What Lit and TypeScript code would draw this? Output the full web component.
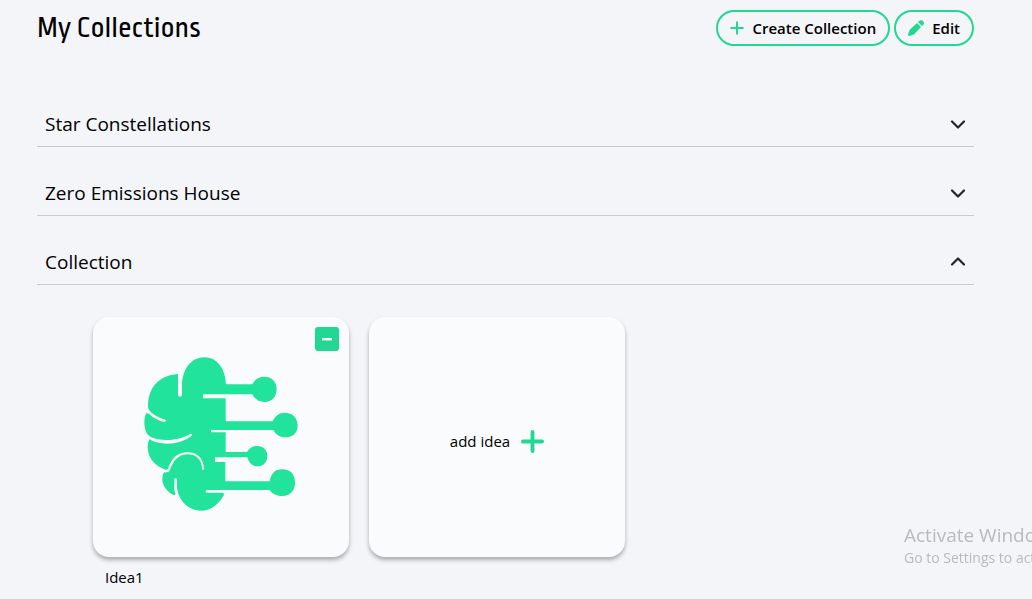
import { LitElement, html, css, svg } from "lit";
import { customElement, property, state } from "lit/decorators.js";

interface Collection {
  name: string;
  ideas: string[];
}

const plusIcon = (size: number, weight: number) => svg`
  <svg width=${size} height=${size} viewBox="0 0 24 24" fill="none" stroke="currentColor"
    stroke-width=${weight} stroke-linecap="round" aria-hidden="true">
    <path d="M12 2v20M2 12h20" />
  </svg>`;

const pencilIcon = svg`
  <svg width="16" height="16" viewBox="0 0 48 48" fill="currentColor" aria-hidden="true">
    <path d="M27 9 39 21 20 41Q17 44 13 45L4 48Q0 48 0 44L3 35Q4 31 7 28Z" />
    <path d="M30 6 34 2Q37 0 41 1Q45 2 47 6Q49 11 46 14L42 18Z" />
  </svg>`;

const brainIcon = svg`
  <svg class="brain" viewBox="42 50 462 462" role="img" aria-label="Idea">
    <g fill="#22e39b">
      <path d="M144 101V166Q150 171 156 166V132C158 85 184 51 223 51C263 51 286 87 288 132H367C374 117 387 109 404 109C426 109 440 125 440 147C440 170 425 185 404 185C387 185 374 177 367 162H219V174H287V243H428C435 227 448 217 465 217C488 217 503 233 503 256C503 277 488 291 466 291C449 291 437 282 430 269H243V276H287V335H351C359 323 366 317 381 317C400 317 412 329 412 347C412 366 400 378 382 378C367 378 357 369 352 351H255V365H286V423H419C423 401 434 387 457 387C482 387 495 402 495 428C495 451 480 467 457 467C438 467 426 460 419 449H230Q223 453 230 457H279Q285 462 278 470C264 493 242 511 215 511C174 511 145 479 141 442V416Q137 411 133 416V448Q134 456 137 461Q132 467 125 461C107 449 97 434 97 416Q97 403 102 396Q114 398 119 391C129 360 147 342 173 342C200 342 215 358 217 388H222C221 353 201 336 173 336C140 336 124 356 114 386Q109 390 101 386C71 373 53 350 53 319Q53 307 58 297C95 318 151 313 185 286Q188 280 182 280C148 302 93 304 61 289C48 282 43 265 43 246Q43 229 48 219Q53 217 58 222C73 235 88 242 103 245Q112 243 106 238C89 234 73 226 60 213Q54 208 54 199C54 143 84 106 144 101Z" />
    </g>
  </svg>`;

@customElement("idea-card")
export class IdeaCard extends LitElement {
  static styles = css`
    :host {
      display: block;
      width: 256px;
    }
    .card {
      position: relative;
      display: flex;
      align-items: center;
      justify-content: center;
      box-sizing: border-box;
      width: 100%;
      height: 240px;
      padding: 0 0 6px;
      border: 0;
      border-radius: 16px;
      background: #f9fbfd;
      box-shadow: 0 3px 4px rgba(0, 0, 0, 0.3);
      color: #000;
    }
    .add {
      gap: 11px;
      padding: 8px 0 0;
      font: 15px/24px "Open Sans", "Noto Sans", sans-serif;
      cursor: pointer;
    }
    .add svg {
      color: #22d791;
    }
    .brain {
      width: 154px;
      height: 154px;
    }
    .remove {
      position: absolute;
      top: 10px;
      right: 10px;
      display: grid;
      place-items: center;
      width: 24px;
      height: 24px;
      padding: 0;
      border: 0;
      border-radius: 3px;
      background: #22d791;
      cursor: pointer;
    }
    .name {
      margin: 8px 12px 0;
      font: 15px/24px "Open Sans", "Noto Sans", sans-serif;
    }
  `;

  @property() name = "";
  @property({ type: Boolean }) add = false;

  render() {
    if (this.add) {
      return html`<button class="card add" type="button">
        <span>add idea</span>${plusIcon(23, 4)}
      </button>`;
    }
    return html`
      <div class="card">
        ${brainIcon}
        <button class="remove" type="button" aria-label="Remove ${this.name}">
          <svg width="10" height="4" viewBox="0 0 10 4" aria-hidden="true">
            <rect y="1" width="10" height="2.4" fill="#fff" />
          </svg>
        </button>
      </div>
      <p class="name">${this.name}</p>
    `;
  }
}

@customElement("app-root")
export class AppRoot extends LitElement {
  static styles = css`
    :host {
      display: block;
      box-sizing: border-box;
      min-height: 100vh;
      padding: 10px 58px 8px 37px;
      background: #f3f5f9;
      color: #000;
      font-family: "Open Sans", "Noto Sans", sans-serif;
    }
    .header {
      display: flex;
      flex-wrap: wrap;
      align-items: center;
      justify-content: space-between;
      margin-bottom: 32px;
    }
    h1 {
      margin: 0;
      font: 400 30px/36px "Ropa Sans", "Roboto Condensed", "Open Sans Condensed", "Roboto", sans-serif;
    }
    .actions {
      display: flex;
      gap: 4px;
    }
    .pill {
      display: flex;
      align-items: center;
      gap: 8px;
      height: 36px;
      padding: 0 12px;
      border: 2px solid #22d791;
      border-radius: 18px;
      background: transparent;
      color: #000;
      font: 600 15px/24px "Open Sans", "Noto Sans", sans-serif;
      cursor: pointer;
    }
    .pill svg {
      color: #22d791;
    }
    h2 {
      margin: 0;
      padding-top: 24px;
      border-bottom: 1px solid #c9cace;
    }
    .toggle {
      display: flex;
      align-items: center;
      justify-content: space-between;
      width: 100%;
      height: 44px;
      padding: 0 8px;
      border: 0;
      background: transparent;
      color: #000;
      font: 400 19px/28px "Open Sans", "Noto Sans", sans-serif;
      cursor: pointer;
    }
    .ideas {
      display: flex;
      flex-wrap: wrap;
      gap: 20px;
      padding: 32px 56px 0;
    }
    .watermark {
      position: fixed;
      right: 0;
      bottom: 31px;
      width: 128px;
      overflow: hidden;
      white-space: nowrap;
      color: #b9babd;
      font-size: 14px;
      line-height: 20px;
      pointer-events: none;
    }
    .watermark p {
      margin: 0;
    }
    .watermark .lead {
      font-size: 19px;
      line-height: 26px;
    }
  `;

  @state() private open = "Collection";

  private collections: Collection[] = [
    { name: "Star Constellations", ideas: [] },
    { name: "Zero Emissions House", ideas: [] },
    { name: "Collection", ideas: ["Idea1"] },
  ];

  private toggle(name: string) {
    this.open = this.open === name ? "" : name;
  }

  private renderCollection(c: Collection) {
    const open = this.open === c.name;
    return html`
      <section>
        <h2>
          <button
            class="toggle"
            type="button"
            aria-expanded=${open ? "true" : "false"}
            @click=${() => this.toggle(c.name)}
          >
            <span>${c.name}</span>
            <svg width="16" height="16" viewBox="0 0 16 16" fill="none" stroke="#212529"
              stroke-width="2.2" stroke-linecap="round" stroke-linejoin="round" aria-hidden="true">
              <path d=${open ? "M2 10.5 8 4.5l6 6" : "M2 5.5l6 6 6-6"} />
            </svg>
          </button>
        </h2>
        ${open
          ? html`<div class="ideas">
              ${c.ideas.map((idea) => html`<idea-card .name=${idea}></idea-card>`)}
              <idea-card add></idea-card>
            </div>`
          : null}
      </section>
    `;
  }

  render() {
    return html`
      <header class="header">
        <h1>My Collections</h1>
        <div class="actions">
          <button class="pill" type="button">${plusIcon(14, 3.4)}Create Collection</button>
          <button class="pill" type="button">${pencilIcon}Edit</button>
        </div>
      </header>
      <main>${this.collections.map((c) => this.renderCollection(c))}</main>
      <aside class="watermark">
        <p class="lead">Activate Windows</p>
        <p>Go to Settings to activate Windows.</p>
      </aside>
    `;
  }
}
